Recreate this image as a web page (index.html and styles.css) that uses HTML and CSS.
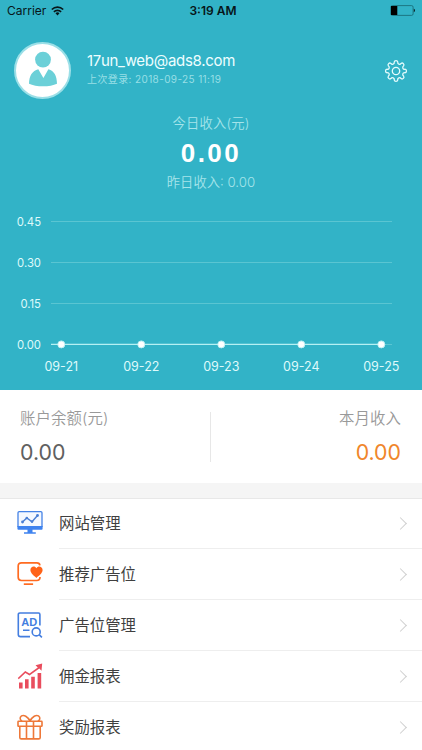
FILE: index.html
```html
<!DOCTYPE html>
<html lang="zh-CN">
<head>
<meta charset="utf-8">
<meta name="viewport" content="width=device-width">
<title>账户</title>
<link rel="stylesheet" href="styles.css">
</head>
<body>
<main class="app">
  <section class="hero">
    <div class="status">
      <div class="carrier"><span>Carrier</span>
        <svg width="13" height="10" viewBox="0 0 13 10"><g fill="none" stroke="#071619" stroke-width="1.7"><path d="M.8 3.5a8.2 8.2 0 0 1 11.4 0"/><path d="M2.9 5.8a5.1 5.1 0 0 1 7.2 0"/></g><path d="M4.5 7.3a2.9 2.9 0 0 1 4 0L6.5 9.4z" fill="#071619"/></svg>
      </div>
      <div class="time">3:19 AM</div>
      <svg class="battery" width="26" height="11" viewBox="0 0 26 11"><rect x=".9" y=".6" width="22.2" height="9.8" rx="1.5" fill="none" stroke="#176772" stroke-width=".8"/><path d="M1 1h6.3v9H1z" fill="#000"/><path d="M23.8 3.8c1.5.3 1.5 3.1 0 3.4z" fill="#071619"/></svg>
    </div>
    <div class="profile">
      <div class="avatar"><svg width="30" height="38" viewBox="0 0 30 38"><g fill="#6bd0d8"><circle cx="15" cy="8.600" r="7.900"/><path d="M10.3 18.2 15.4 27l5-8.800c5.700 1.600 8.500 6.500 8.600 14.500-6.800 3.400-21 3.400-28 0 .2-8 3.300-12.900 9.300-14.500z"/></g></svg></div>
      <div class="who"><div class="mail">17un_web@ads8.com</div><div class="last">上次登录: 2018-09-25 11:19</div></div>
      <svg class="gear" width="24" height="24" viewBox="-12 -12 24 24"><g fill="none" stroke="#e4fbfc" stroke-width="1.3"><path d="M8.930-1.780A1.800 1.800 0 0 1 8.930 1.780A1.800 1.800 0 0 0 7.570 5.060A1.800 1.800 0 0 1 5.060 7.570A1.800 1.800 0 0 0 1.780 8.930A1.800 1.800 0 0 1-1.780 8.930A1.800 1.800 0 0 0-5.060 7.570A1.800 1.800 0 0 1-7.570 5.060A1.800 1.800 0 0 0-8.930 1.780A1.800 1.800 0 0 1-8.930-1.780A1.800 1.800 0 0 0-7.570-5.060A1.800 1.800 0 0 1-5.060-7.570A1.800 1.800 0 0 0-1.780-8.930A1.800 1.800 0 0 1 1.780-8.930A1.800 1.800 0 0 0 5.060-7.570A1.800 1.800 0 0 1 7.570-5.060A1.800 1.800 0 0 0 8.930-1.780Z"/><circle r="3.700"/></g></svg>
    </div>
    <div class="income">
      <div class="today">今日收入(元)</div>
      <div class="amount">0.00</div>
      <div class="yesterday">昨日收入: 0.00</div>
    </div>
    <svg class="chart" width="422" height="190" viewBox="0 200 422 190">
      <path d="M51 221.500H392M51 262.500H392M51 303.500H392M51 344.500H392" stroke="#5ac5d2" stroke-width="1"/>
      <path d="M51 344.400H381" stroke="#b5f0f3" stroke-width="1.400"/>
      <g class="ylabels"><text x="41" y="226">0.45</text><text x="41" y="267">0.30</text><text x="41" y="308">0.15</text><text x="41" y="348.500">0.00</text></g>
      <g class="points"><circle cx="61.300" cy="344.400" r="3.500"/><circle cx="141.300" cy="344.400" r="3.500"/><circle cx="221.300" cy="344.400" r="3.500"/><circle cx="301.300" cy="344.400" r="3.500"/><circle cx="381.300" cy="344.400" r="3.500"/></g>
      <g class="xlabels"><text x="61.300" y="370.500">09-21</text><text x="141.300" y="370.500">09-22</text><text x="221.300" y="370.500">09-23</text><text x="301.300" y="370.500">09-24</text><text x="381.300" y="370.500">09-25</text></g>
    </svg>
  </section>
  <section class="balances">
    <div class="balance"><div class="label">账户余额(元)</div><div class="value">0.00</div></div>
    <div class="balance month"><div class="label">本月收入</div><div class="value">0.00</div></div>
  </section>
  <nav class="menu">
    <a class="item"><svg class="icon" viewBox="0 0 26 26"><path d="M1 17V2.800Q1 1.600 2.200 1.600H23.800Q25 1.600 25 2.800V17" fill="#f5f9ff" stroke="#4583e6" stroke-width="1.300"/><path d="M.4 16h25.200v2.800q0 1-1 1H1.400q-1 0-1-1zM10.500 19.500h5v2.700h3.300v1.600H7v-1.600h3.500z" fill="#3f83ef"/><path d="m5.500 12 4.300-4 5.200 3.800 5.500-6.300" fill="none" stroke="#4b7fd4" stroke-width="1.400"/><g fill="#4b7fd4"><circle cx="5.500" cy="12" r="1.400"/><circle cx="9.800" cy="8" r="1.300"/><circle cx="15" cy="11.600" r="1.300"/><circle cx="20.500" cy="5.500" r="1.400"/></g></svg><div class="row"><span>网站管理</span><i class="chev"></i></div></a>
    <a class="item"><svg class="icon" viewBox="0 0 26 26"><path d="M22.900 4.300q-.3-2.500-3-2.500H4.500Q1.200 1.800 1.200 5v11.300q0 3.200 3.300 3.200h15.200q3.300 0 3.300-3.500" fill="none" stroke="#ff6b21" stroke-width="1.700"/><path d="M6.800 22.300h9.300V24H6.800z" fill="#ff6b21"/><path d="M19.400 16.900c-2.100-1.700-6-4.700-6-7.800 0-3.800 4.500-4.700 6-1.800 1.500-2.900 6.200-2 6.200 1.800 0 3.100-4.100 6.100-6.200 7.800z" fill="#ff6217"/></svg><div class="row"><span>推荐广告位</span><i class="chev"></i></div></a>
    <a class="item"><svg class="icon" viewBox="0 0 26 26"><g fill="none" stroke="#447ee0" stroke-width="1.600"><path d="M13 24.600H3.500q-2.200 0-2.200-2.200V2.600q0-1.600 1.600-1.600h18.600q1.400 0 1.400 1.400v11.200M6 18.200h6.500"/><circle cx="19.200" cy="19.900" r="4"/><path d="m22.100 22.600 2.800 2.700"/></g><text class="ad" x="12.300" y="13.700">AD</text></svg><div class="row"><span>广告位管理</span><i class="chev"></i></div></a>
    <a class="item"><svg class="icon" viewBox="0 0 26 26"><g fill="#e94d5d"><path d="M2 19.500h3.600v6H2zM8 16.300h3.600v9.200H8zM14.200 13.700h3.600v11.800h-3.600zM20.600 10h3.600v15.500h-3.600z"/><path d="m25.200.5-.7 7.200-2.200-2.100-9.800 7-4.100-2.500-6.700 6.100-.9-1.200 7.400-7 4.300 2.500 8.300-6.100-2.300-2.200z"/></g></svg><div class="row"><span>佣金报表</span><i class="chev"></i></div></a>
    <a class="item"><svg class="icon" viewBox="0 0 26 26"><g fill="none" stroke="#ee7839" stroke-width="1.600" stroke-linejoin="round"><rect x="1" y="7.300" width="24" height="5" rx=".6"/><path d="M2.800 12.400v11q0 1.500 1.500 1.500h17.400q1.500 0 1.500-1.500v-11M9.500 7.500v17M16.500 7.500v17"/><path d="M13 7C10.500 2.400 7 .500 4.500 1.900 2.200 3.500 3.100 6.500 5.200 7.200M13 7c2.500-4.600 6-6.500 8.500-5.100 2.300 1.600 1.400 4.600-.7 5.300"/></g></svg><div class="row"><span>奖励报表</span><i class="chev"></i></div></a>
  </nav>
</main>
</body>
</html>
```
FILE: styles.css
```css
* { box-sizing: border-box; }
body { margin: 0; background: #fff; font-family: Inter, "Noto Sans CJK SC", sans-serif; }
.app { width: 422px; height: 750px; overflow: hidden; display: flex; flex-direction: column; }
.hero { height: 390px; flex: none; background: #32b3c7; display: flex; flex-direction: column; }
.status { height: 22px; flex: none; display: grid; grid-template-columns: 1fr auto 1fr; align-items: center; padding: 0 6px 0 7px; color: #071619; font-size: 12px; line-height: 22px; }
.carrier { display: flex; align-items: center; gap: 5px; font-family: Inter, sans-serif; }
.battery { justify-self: end; margin-top: -2px; }
.time { font-weight: 600; padding-left: 3px; }
.profile { height: 84px; flex: none; display: flex; align-items: center; padding: 12px 14px 0; }
.avatar { width: 57px; height: 57px; border: 2.500px solid #9bdfe7; border-radius: 50%; background: #fff; display: flex; align-items: center; justify-content: center; }
.who { margin: -4px 0 0 16px; flex: 1; white-space: nowrap; }
.mail { color: #eefeff; font-size: 15px; line-height: 20px; letter-spacing: -.3px; }
.last { color: #98dfe6; font-size: 10px; line-height: 14px; margin-top: 1px; letter-spacing: .38px; }
.gear { margin-top: 1px; }
.income { height: 94px; flex: none; text-align: center; color: #a5e4ea; font-weight: 350; font-size: 13.300px; }
.today { padding-top: 7px; line-height: 20px; letter-spacing: .2px; }
.amount { color: #fff; font: bold 26px/32px "Liberation Sans", sans-serif; letter-spacing: 2.500px; margin-top: 4px; }
.yesterday { margin-top: 3px; line-height: 20px; }
.chart { display: block; flex: none; }
.chart text { fill: #dffafb; }
.ylabels { font-size: 11.300px; text-anchor: end; }
.xlabels { font-size: 12.500px; text-anchor: middle; }
.points circle { fill: #fff; stroke: #bdeff3; stroke-width: 1; }
.balances { height: 93px; flex: none; display: flex; padding: 22px 21px 22px 20px; }
.balance { flex: 1; height: 50px; }
.month { border-left: 1px solid #e7e7e7; text-align: right; }
.label { color: #999; font-size: 15.400px; font-weight: 350; line-height: 14px; letter-spacing: .1px; }
.value { color: #606060; font-size: 21.300px; line-height: 26px; margin-top: 13px; }
.month .value { color: #f0862b; }
.menu { border-top: 15px solid #f5f5f5; box-shadow: inset 0 1px #e8e8e8; }
.item { display: flex; height: 51px; padding-left: 17px; }
.icon { width: 26px; height: 26px; margin-top: 12px; flex: none; overflow: visible; }
.ad { font: bold 11px "Liberation Sans", sans-serif; fill: #447ee0; text-anchor: middle; }
.row { flex: 1; height: 51px; margin-left: 16px; border-bottom: 1px solid #eee; display: flex; align-items: center; justify-content: space-between; color: #3f3f3f; font-size: 15.400px; padding-right: 17px; }
.row span { margin-top: -2px; }
.chev { width: 9px; height: 9px; border: solid #d0d0d0; border-width: 1px 1px 0 0; transform: rotate(45deg); }
```
